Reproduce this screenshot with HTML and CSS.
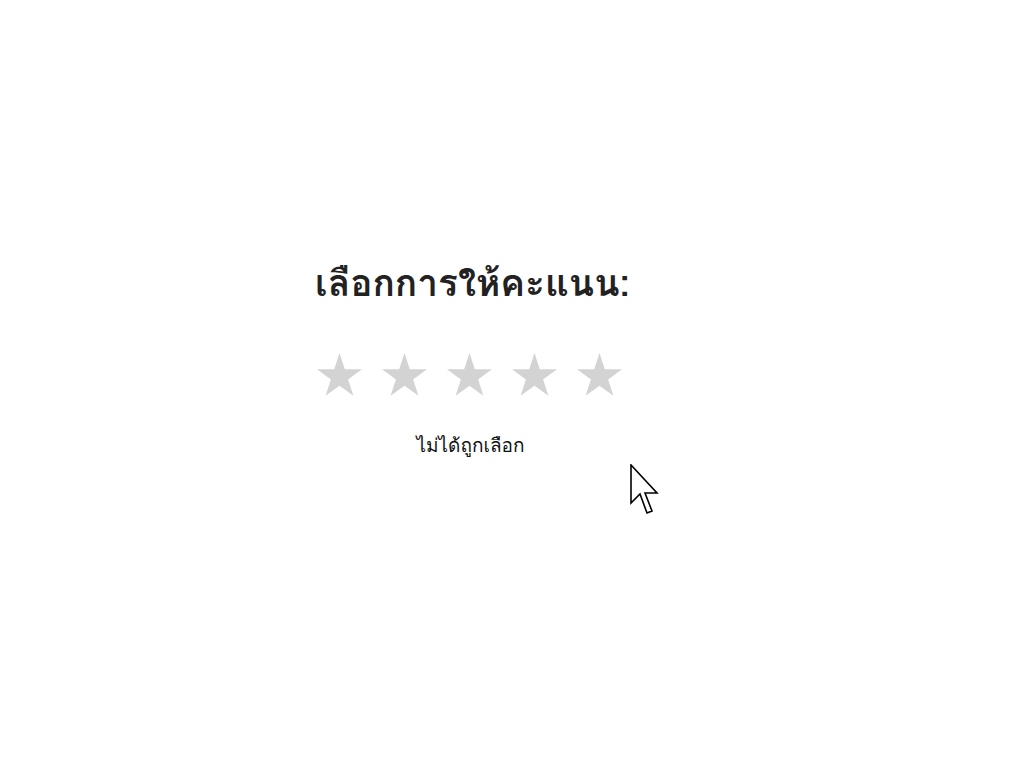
FILE: index.html
```html
<!DOCTYPE html>
<html lang="th">
<head>
<meta charset="utf-8">
<title>Rating</title>
<link rel="stylesheet" href="styles.css">
</head>
<body>
<div class="page">
  <div class="rating">
    <h2 class="title">เลือกการให้คะแนน:</h2>
    <div class="stars">
      <svg class="star" viewBox="0 0 45 43" width="45" height="43"><polygon points="22.5,0 27.82,16.35 45,16.35 31.1,26.45 36.41,42.8 22.5,32.7 8.59,42.8 13.9,26.45 0,16.35 17.18,16.35"/></svg>
      <svg class="star" viewBox="0 0 45 43" width="45" height="43"><polygon points="22.5,0 27.82,16.35 45,16.35 31.1,26.45 36.41,42.8 22.5,32.7 8.59,42.8 13.9,26.45 0,16.35 17.18,16.35"/></svg>
      <svg class="star" viewBox="0 0 45 43" width="45" height="43"><polygon points="22.5,0 27.82,16.35 45,16.35 31.1,26.45 36.41,42.8 22.5,32.7 8.59,42.8 13.9,26.45 0,16.35 17.18,16.35"/></svg>
      <svg class="star" viewBox="0 0 45 43" width="45" height="43"><polygon points="22.5,0 27.82,16.35 45,16.35 31.1,26.45 36.41,42.8 22.5,32.7 8.59,42.8 13.9,26.45 0,16.35 17.18,16.35"/></svg>
      <svg class="star" viewBox="0 0 45 43" width="45" height="43"><polygon points="22.5,0 27.82,16.35 45,16.35 31.1,26.45 36.41,42.8 22.5,32.7 8.59,42.8 13.9,26.45 0,16.35 17.18,16.35"/></svg>
    </div>
    <p class="status">ไม่ได้ถูกเลือก</p>
  </div>
</div>
<svg class="cursor" width="30" height="52" viewBox="0 0 30 52"><path d="M1,1 L1,39 L10,30 L17,49 L22,47 L15,29 L27,29 Z" fill="#fff" stroke="#000" stroke-width="1.6" stroke-linejoin="miter"/></svg>
</body>
</html>
```
FILE: styles.css
```css
html, body {
  margin: 0;
  padding: 0;
  background: #fff;
}
body {
  font-family: "Loma", "DejaVu Sans", sans-serif;
  color: #222;
}
.page {
  padding-top: 253px;
  padding-left: 315px;
}
.rating {
  display: inline-flex;
  flex-direction: column;
}
.title {
  margin: 0;
  font-size: 37px;
  font-weight: 600;
  line-height: 60px;
  color: #222;
}
.stars {
  display: flex;
  gap: 20px;
  margin-top: 40px;
  padding-left: 2px;
}
.star polygon {
  fill: #d3d3d3;
}
.status {
  margin: 36px 0 0;
  text-align: center;
  font-size: 19px;
  line-height: 26px;
  color: #111;
  padding-left: 2px;
  width: 307px;
}
.cursor {
  position: absolute;
  left: 630px;
  top: 464px;
}
```
